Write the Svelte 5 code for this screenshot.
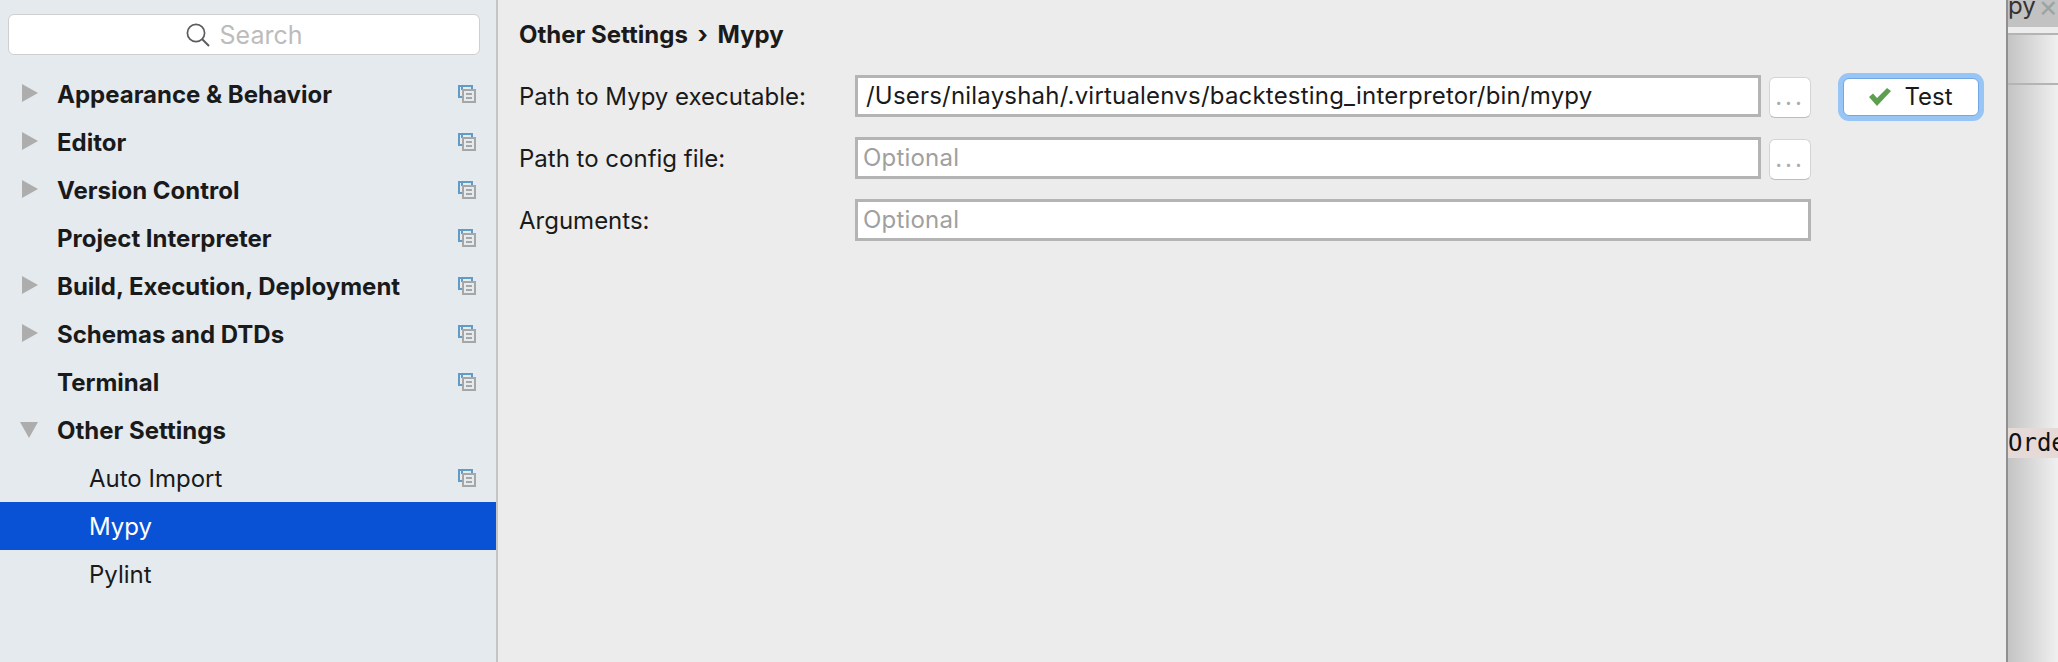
<script lang="ts">
	const items = [
		{ name: 'Appearance & Behavior', arrow: 'right', copy: true },
		{ name: 'Editor', arrow: 'right', copy: true },
		{ name: 'Version Control', arrow: 'right', copy: true },
		{ name: 'Project Interpreter', copy: true },
		{ name: 'Build, Execution, Deployment', arrow: 'right', copy: true },
		{ name: 'Schemas and DTDs', arrow: 'right', copy: true },
		{ name: 'Terminal', copy: true },
		{ name: 'Other Settings', arrow: 'down' },
		{ name: 'Auto Import', child: true, copy: true },
		{ name: 'Mypy', child: true, selected: true },
		{ name: 'Pylint', child: true }
	];
</script>

<div class="window">
	<aside class="sidebar">
		<div class="search">
			<svg class="search-icon" width="24" height="24" viewBox="0 0 24 24">
				<circle cx="10" cy="10" r="8.6" fill="none" stroke="#5c5c5c" stroke-width="1.7" />
				<path d="M16 16l7 7" stroke="#5c5c5c" stroke-width="2" fill="none" />
			</svg>
			<span>Search</span>
		</div>
		<ul class="tree">
			{#each items as item}
				<li class:child={item.child} class:selected={item.selected}>
					{#if item.arrow === 'right'}
						<svg class="arrow" width="16" height="18" viewBox="0 0 16 18"><path d="M0 0l16 9L0 18z" fill="#adadad" /></svg>
					{:else if item.arrow === 'down'}
						<svg class="arrow down" width="18" height="16" viewBox="0 0 18 16"><path d="M0 0h18L9 16z" fill="#adadad" /></svg>
					{/if}
					<span class="label">{item.name}</span>
					{#if item.copy}
						<svg class="copy" width="18" height="18" viewBox="0 0 18 18">
							<path d="M9 1H1v11h3" fill="none" stroke="#5f9cc6" stroke-width="2" />
							<path d="M4 5V1h10v4" fill="none" stroke="#5f9cc6" stroke-width="2" />
							<rect x="5" y="5" width="12" height="12" fill="#e5eaef" stroke="#a6a6a6" stroke-width="2" />
							<path d="M8 9h6M8 13h6" stroke="#a6a6a6" stroke-width="2" />
						</svg>
					{/if}
				</li>
			{/each}
		</ul>
	</aside>

	<main class="panel">
		<h1>Other Settings <span class="sep">›</span> Mypy</h1>
		<div class="form">
			<div class="row">
				<span class="field-label">Path to Mypy executable:</span>
				<div class="input">/Users/nilayshah/.virtualenvs/backtesting_interpretor/bin/mypy</div>
				<button class="dots">...</button>
				<button class="test">
					<svg width="22" height="18" viewBox="0 0 22 18"><path d="M0 9l4-3.5 4 4.5L18 0l4 3L8 18z" fill="#5ca04f" /></svg>
					Test
				</button>
			</div>
			<div class="row">
				<span class="field-label">Path to config file:</span>
				<div class="input placeholder">Optional</div>
				<button class="dots">...</button>
			</div>
			<div class="row">
				<span class="field-label">Arguments:</span>
				<div class="input wide placeholder">Optional</div>
			</div>
		</div>
	</main>

	<div class="backdrop">
		<div class="tab"><span>py</span><span class="close">×</span></div>
		<div class="tab-line"></div>
		<div class="gutter-top"></div>
		<div class="code"><div class="highlight">Orde</div></div>
	</div>
</div>

<style>
	:global(body) {
		margin: 0;
		background: #ececec;
	}

	.window {
		display: flex;
		width: 2058px;
		height: 662px;
		overflow: hidden;
		font-family: Inter, 'Liberation Sans', sans-serif;
		color: #1a1a1a;
	}

	.sidebar {
		width: 496px;
		flex-shrink: 0;
		background: #e5eaef;
		border-right: 2px solid #c4c4c4;
		padding-top: 14px;
		box-sizing: content-box;
	}

	.search {
		display: flex;
		align-items: center;
		justify-content: center;
		gap: 10px;
		width: 472px;
		height: 41px;
		margin-left: 8px;
		box-sizing: border-box;
		background: #fff;
		border: 1px solid #cfcfcf;
		border-radius: 6px;
		font-size: 25px;
		color: #bcbcbc;
	}

	.tree {
		list-style: none;
		margin: 15px 0 0;
		padding: 0;
	}

	.tree li {
		position: relative;
		display: flex;
		align-items: center;
		height: 48px;
		padding-left: 57px;
		font-size: 24px;
		font-weight: 700;
	}

	.tree li.child {
		padding-left: 89px;
		font-weight: 400;
	}

	.tree li.selected {
		background: #0a52d5;
		color: #fff;
	}

	.arrow {
		position: absolute;
		left: 22px;
		top: 14px;
	}

	.arrow.down {
		left: 20px;
		top: 16px;
	}

	.copy {
		position: absolute;
		left: 458px;
		top: 15px;
	}

	.panel {
		width: 1508px;
		flex-shrink: 0;
		padding: 20px 0 0 21px;
		box-sizing: border-box;
	}

	h1 {
		margin: 0;
		font-size: 24px;
		line-height: 30px;
		font-weight: 700;
	}

	.sep {
		margin: 0 4px;
	}

	.form {
		display: flex;
		flex-direction: column;
		gap: 20px;
		margin-top: 25px;
	}

	.row {
		display: flex;
		align-items: center;
		height: 42px;
		font-size: 24px;
	}

	.field-label {
		width: 336px;
		flex-shrink: 0;
	}

	.input {
		width: 906px;
		height: 42px;
		box-sizing: border-box;
		padding: 0 8px 0 8px;
		background: #fff;
		border: 3px solid #b4b4b4;
		line-height: 36px;
		letter-spacing: 0.2px;
	}

	.input.wide {
		width: 956px;
	}

	.placeholder {
		color: #a0a0a0;
		padding-left: 5px;
	}

	.dots {
		width: 42px;
		height: 41px;
		margin: 2px 0 0 8px;
		padding: 0 0 8px;
		background: #fff;
		border: 1px solid #d4d4d4;
		border-bottom-color: #bdbdbd;
		border-radius: 6px;
		color: #ababab;
		font-family: inherit;
		font-size: 24px;
		line-height: 1;
		letter-spacing: 3px;
		display: flex;
		align-items: flex-end;
		justify-content: center;
	}

	.test {
		display: flex;
		align-items: center;
		justify-content: center;
		gap: 13px;
		width: 136px;
		height: 38px;
		margin: 1px 0 0 32px;
		padding: 0;
		box-sizing: border-box;
		background: #fff;
		border: 1px solid #74a6e4;
		border-radius: 6px;
		box-shadow: 0 0 0 5px #97c5f6;
		color: #1a1a1a;
		font-family: inherit;
		font-size: 24px;
	}

	.backdrop {
		flex: 1;
		display: flex;
		flex-direction: column;
		border-left: 2px solid #8f8f8f;
		background: linear-gradient(to right, #c4c4c4, #f0f0f0 50px);
		overflow: hidden;
		font-family: 'DejaVu Sans Mono', monospace;
		font-size: 24px;
	}

	.tab {
		display: flex;
		justify-content: space-between;
		height: 27px;
		background: #c2c2c2;
		line-height: 12px;
		color: #333;
		font-family: Inter, sans-serif;
	}

	.close {
		color: #9aa5a5;
		font-size: 30px;
	}

	.tab-line {
		height: 6px;
		background: #ececec;
		border-bottom: 2px solid #b4b4b4;
	}

	.gutter-top {
		height: 48px;
		border-bottom: 2px solid #b4b4b4;
	}

	.code {
		padding-top: 343px;
	}

	.highlight {
		height: 30px;
		line-height: 30px;
		background: #e6dad8;
		color: #111;
		white-space: nowrap;
	}
</style>
